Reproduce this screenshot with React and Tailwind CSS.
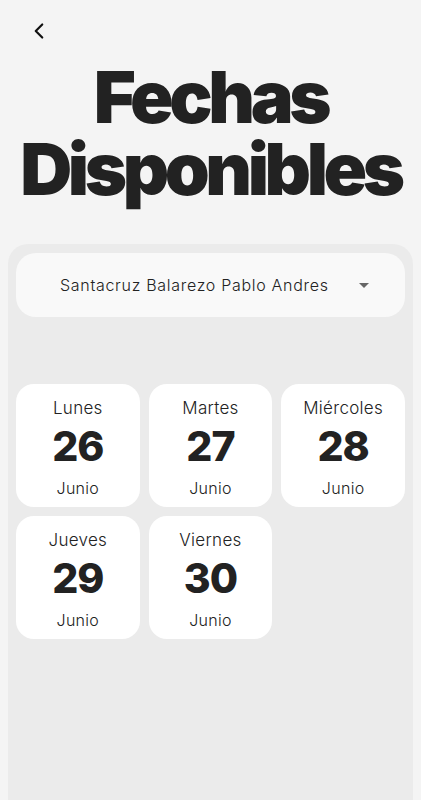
import { ChevronLeft } from "lucide-react";

const DAYS = [
  { name: "Lunes", day: 26, month: "Junio" },
  { name: "Martes", day: 27, month: "Junio" },
  { name: "Miércoles", day: 28, month: "Junio" },
  { name: "Jueves", day: 29, month: "Junio" },
  { name: "Viernes", day: 30, month: "Junio" },
];

function DayCard({ name, day, month }) {
  return (
    <button className="h-[123px] rounded-[18px] bg-white flex flex-col items-center pt-[13px] text-[#222]">
      <span className="text-[17px] leading-[22px] font-light tracking-[0.3px]">{name}</span>
      <span className="text-[41px] leading-[44px] font-extrabold tracking-[-1px] mt-[5px]">
        {day}
      </span>
      <span className="text-[16px] leading-[22px] font-light tracking-[0.3px] mt-[9px]">
        {month}
      </span>
    </button>
  );
}

export default function App() {
  return (
    <div
      className="min-h-[800px] bg-[#f4f4f4] flex flex-col"
      style={{ fontFamily: "Inter, 'Noto Sans', sans-serif" }}
    >
      {/* Header */}
      <div className="pl-[26px] pt-[18px] h-[60px]">
        <ChevronLeft size={26} strokeWidth={2} className="text-[#111]" />
      </div>
      <h1 className="text-center text-[72px] leading-[72px] font-black tracking-[-4.4px] text-[#222] mt-[1px]">
        Fechas
        <br />
        Disponibles
      </h1>

      {/* Panel */}
      <div className="flex-1 mx-2 mt-[39px] rounded-t-[20px] bg-[#ebebeb] px-2 pt-[9px]">
        <div className="h-16 rounded-[20px] bg-[#f9f9f9] flex items-center pl-[44px]">
          <span className="text-[16px] font-light tracking-[0.7px] text-[#222]">
            Santacruz Balarezo Pablo Andres
          </span>
          <span className="ml-[30px] w-0 h-0 border-l-[5px] border-r-[5px] border-t-[5px] border-l-transparent border-r-transparent border-t-[#666]" />
        </div>

        <div className="grid grid-cols-3 gap-[9px] mt-[67px]">
          {DAYS.map((d) => (
            <DayCard key={d.day} {...d} />
          ))}
        </div>
      </div>
    </div>
  );
}
